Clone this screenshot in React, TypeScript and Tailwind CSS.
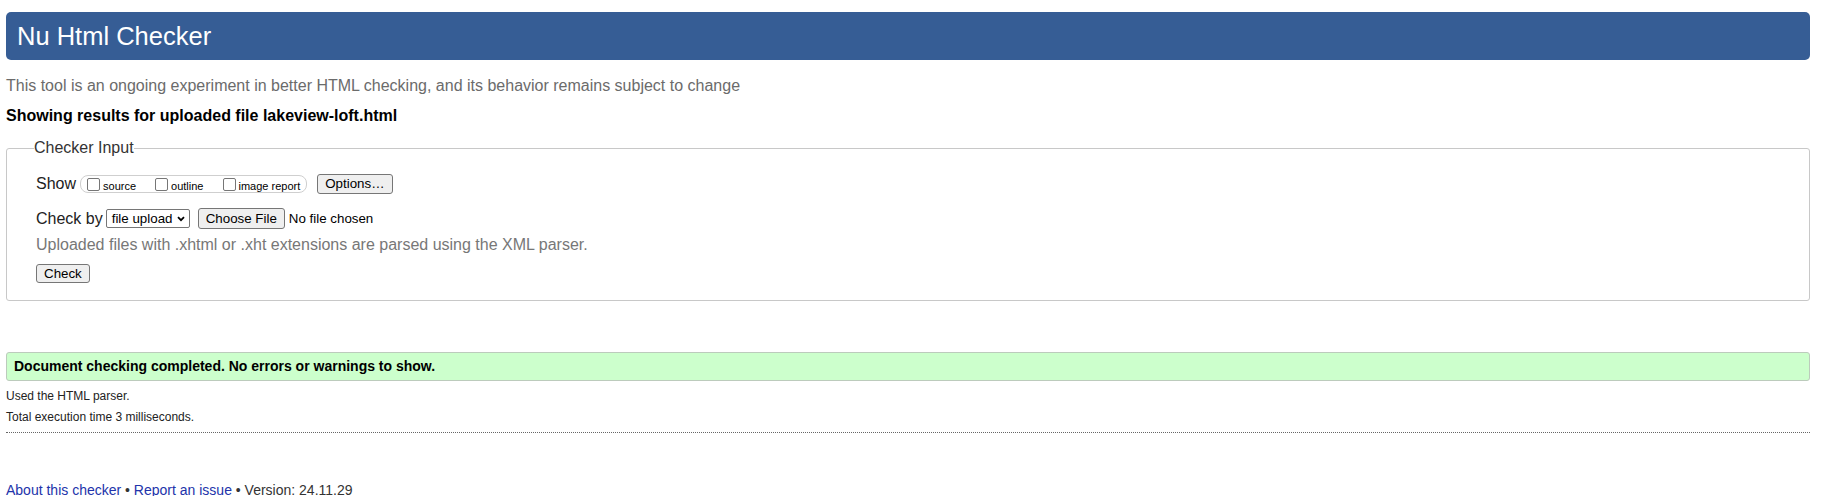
import React from "react";

function Box() {
  return <span className="inline-block w-[13px] h-[13px] border border-[#767676] rounded-[2px] bg-white shrink-0" />;
}

function Btn({ children, cls }: { children: React.ReactNode; cls?: string }) {
  return (
    <span
      className={
        "inline-flex items-center justify-center whitespace-nowrap shrink-0 border border-[#767676] rounded-[3px] bg-[#efefef] text-[13.33px] text-black px-[7px] " +
        (cls || "")
      }
    >
      {children}
    </span>
  );
}

export default function App() {
  return (
    <div className="min-h-[496px] bg-white font-['Liberation_Sans',Arial,sans-serif] pl-[6px] pr-[28px] pt-[12px] text-[#222]">
      <div className="h-[48px] flex items-center pl-[11px] bg-[#365d95] rounded-[5px] text-white text-[25.5px] leading-[28px]">
        Nu Html Checker
      </div>
      <p className="mt-[17px] text-[16px] leading-[18px] text-[#6b6b6b]">
        This tool is an ongoing experiment in better HTML checking, and its behavior remains subject to change
      </p>
      <p className="mt-[12px] text-[16px] leading-[18px] font-bold text-black">
        Showing results for uploaded file lakeview-loft.html
      </p>
      <fieldset className="mt-[14px] border border-[#c8c8c8] rounded-[3px] pl-[29px] pr-[29px] pb-[17px]">
        <legend className="-ml-0.5 p-0 text-[16px] leading-[18px] text-[#333]">Checker Input</legend>
        <div className="mt-[17px] h-[20px] flex items-center">
          <span className="text-[16px] leading-[18px]">Show</span>
          <span className="ml-[4px] h-[18px] flex items-center border border-[#cfcfcf] rounded-[8px] pl-[6px] pr-[6px]">
            <span className="flex items-center">
              <Box />
              <span className="ml-[3px] mt-[3px] text-[11px] leading-[12px] text-black">source</span>
            </span>
            <span className="flex items-center ml-[19px]">
              <Box />
              <span className="ml-[3px] mt-[3px] text-[11px] leading-[12px] text-black">outline</span>
            </span>
            <span className="flex items-center ml-[20px]">
              <Box />
              <span className="ml-[2px] mt-[3px] text-[11px] leading-[12px] text-black">image report</span>
            </span>
          </span>
          <Btn cls="ml-[10px] h-[20px]">Options…</Btn>
        </div>
        <div className="mt-[14px] h-[21px] flex items-center">
          <span className="text-[16px] leading-[18px]">Check by</span>
          <span className="ml-[3px] w-[84px] h-[19px] flex items-center justify-between border border-[#767676] rounded-[2px] bg-white pl-[5px] pr-[4px] text-[13.33px] text-black whitespace-nowrap">
            <span>file upload</span>
            <svg width="8" height="6" viewBox="0 0 8 6" className="shrink-0">
              <path d="M1 1.2 L4 4.2 L7 1.2" fill="none" stroke="#000" strokeWidth="1.8" />
            </svg>
          </span>
          <Btn cls="ml-[8px] h-[21px]">Choose File</Btn>
          <span className="ml-[4px] text-[13.33px] text-black whitespace-nowrap">No file chosen</span>
        </div>
        <p className="mt-[7px] text-[16px] leading-[18px] text-[#777]">
          Uploaded files with .xhtml or .xht extensions are parsed using the XML parser.
        </p>
        <div className="mt-[10px] flex">
          <Btn cls="h-[19px]">Check</Btn>
        </div>
      </fieldset>
      <div className="mt-[51px] h-[29px] flex items-center pl-[7px] border border-[#bccbbc] rounded-[3px] bg-[#ccffcc] text-[14px] font-bold text-black">
        Document checking completed. No errors or warnings to show.
      </div>
      <p className="mt-[8px] text-[12px] leading-[14px] text-[#222]">Used the HTML parser.</p>
      <p className="mt-[7px] text-[12px] leading-[14px] text-[#222]">Total execution time 3 milliseconds.</p>
      <div className="mt-[8px] border-t border-dotted border-[#666]" />
      <p className="mt-[49px] text-[14px] leading-[16px] text-[#333]">
        <a className="text-[#2233aa]">About this checker</a> • <a className="text-[#2233aa]">Report an issue</a> • Version: 24.11.29
      </p>
    </div>
  );
}
